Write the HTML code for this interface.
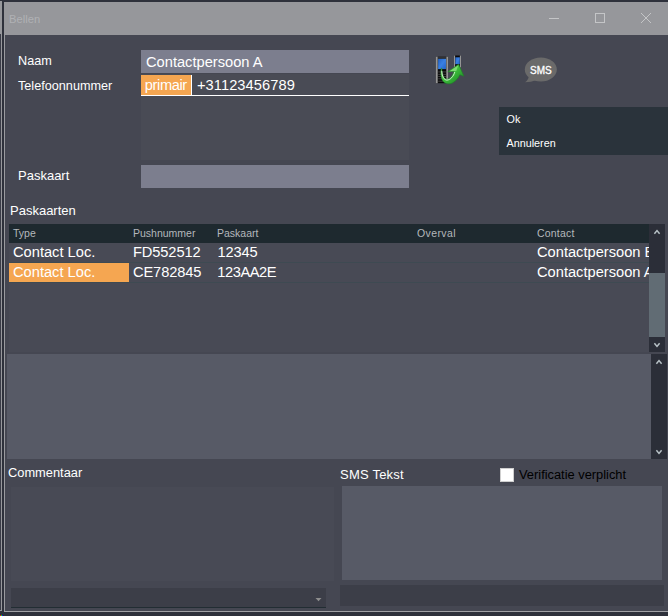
<!DOCTYPE html>
<html><head><meta charset="utf-8">
<style>
html,body{margin:0;padding:0;}
body{width:668px;height:616px;overflow:hidden;background:#2e313b;font-family:"Liberation Sans",Arial,sans-serif;position:relative;}
.abs{position:absolute;}
.t{position:absolute;white-space:nowrap;color:#fff;line-height:1;}
.lbl{font-size:12.67px;}
.val{font-size:14.67px;}
.hdr{font-size:10.5px;color:#b4b8bc;}
</style></head><body>
<!-- behind window slivers -->
<div class="abs" style="left:0;top:1px;width:2px;height:33px;background:#97989c"></div>
<div class="abs" style="left:0;top:34px;width:1px;height:577px;background:#3a3c47"></div>
<div class="abs" style="left:1px;top:34px;width:1px;height:577px;background:#97989c"></div>
<div class="abs" style="left:0;top:610px;width:2px;height:1px;background:#97989c"></div>
<div class="abs" style="left:0;top:615px;width:1px;height:1px;background:#f00"></div><div class="abs" style="left:1px;top:615px;width:1px;height:1px;background:#0f0"></div><div class="abs" style="left:2px;top:615px;width:1px;height:1px;background:#00f"></div>
<!-- window -->
<div class="abs" style="left:4px;top:2px;width:664px;height:33px;background:#96979b"></div>
<div class="abs" style="left:4px;top:35px;width:664px;height:577px;background:#454752"></div>
<div class="abs" style="left:4px;top:35px;width:1px;height:577px;background:#9a9b9f"></div>
<div class="abs" style="left:4px;top:611px;width:664px;height:1px;background:#a0a1a5"></div>
<div class="t" style="left:9px;top:13.6px;font-size:11.2px;color:#b0b1b4">Bellen</div>
<!-- window controls -->
<svg class="abs" style="left:540px;top:8px" width="128" height="22" viewBox="0 0 128 22">
<g stroke="#c4c5c7" stroke-width="1" fill="none">
<line x1="9" y1="10.5" x2="19" y2="10.5"/>
<rect x="55.5" y="5.5" width="9" height="9"/>
<line x1="101" y1="5" x2="111" y2="15"/><line x1="111" y1="5" x2="101" y2="15"/>
</g></svg>

<!-- form top -->
<div class="t lbl" style="left:18px;top:55px">Naam</div>
<div class="t lbl" style="left:18px;top:80px">Telefoonnummer</div>
<div class="t lbl" style="left:18px;top:169px;font-size:13px">Paskaart</div>
<div class="abs" style="left:141px;top:50px;width:268px;height:23px;background:#7c7e8e"></div>
<div class="t val" style="left:146px;top:55px">Contactpersoon A</div>
<div class="abs" style="left:141px;top:74px;width:268px;height:86px;background:#494b55"></div>
<div class="abs" style="left:141px;top:75px;width:50px;height:20px;background:#f5a651"></div>
<div class="abs" style="left:191px;top:75px;width:1px;height:21px;background:#fff"></div>
<div class="abs" style="left:141px;top:95px;width:268px;height:1px;background:#fff"></div>
<div class="abs" style="left:141px;top:75px;width:47.5px;height:20px;overflow:hidden"><div class="t val" style="left:3.8px;top:2.5px;letter-spacing:-0.4px">primair</div></div>
<div class="t val" style="left:197px;top:78.3px;letter-spacing:0.06px">+31123456789</div>
<div class="abs" style="left:141px;top:165px;width:268px;height:23px;background:#7c7e8e"></div>

<!-- icons -->
<svg class="abs" style="left:430px;top:50px" width="40" height="40" viewBox="0 0 40 40">
<defs>
<linearGradient id="g1" x1="0.1" y1="0.1" x2="0.9" y2="0.9"><stop offset="0" stop-color="#86e276"/><stop offset="0.45" stop-color="#3fbe3c"/><stop offset="1" stop-color="#1c8a25"/></linearGradient>
<linearGradient id="g2" x1="0" y1="0" x2="1" y2="1"><stop offset="0" stop-color="#2462c4"/><stop offset="0.5" stop-color="#3a80e2"/><stop offset="1" stop-color="#2462c4"/></linearGradient>
</defs>
<rect x="5.8" y="6.7" width="12.3" height="26.5" fill="#0a0a0a"/>
<rect x="5.8" y="6.7" width="1.9" height="26.5" fill="#959595"/><rect x="16.3" y="6.7" width="1.8" height="26.5" fill="#959595"/>
<rect x="7.9" y="7.3" width="8.2" height="1.2" fill="#444"/>
<rect x="8.1" y="8.8" width="7.9" height="10.3" fill="url(#g2)"/>
<g fill="#555"><rect x="8.2" y="21.6" width="7.8" height="0.7"/><rect x="8.2" y="23.9" width="7.8" height="0.7"/><rect x="8.2" y="26.2" width="7.8" height="0.7"/><rect x="8.2" y="28.5" width="7.8" height="0.7"/><rect x="8.2" y="30.8" width="7.8" height="0.7"/></g>
<rect x="23.9" y="5.5" width="7.1" height="12" fill="#0a0a0a"/>
<rect x="23.9" y="5.5" width="1.2" height="12" fill="#959595"/><rect x="29.9" y="5.5" width="1.1" height="12" fill="#959595"/>
<rect x="25.3" y="7.3" width="4.5" height="6.9" fill="url(#g2)"/>
<path d="M11.4 18 C10.4 22 10.6 27 12.5 30.5 C14.5 33.9 19 34.7 22.5 32.9 C26 31.1 28.7 27.8 29.8 24.8 L33.9 26.2 L28.6 14.3 L17.8 21.8 L23.9 21.4 C22.8 25.3 20 29 16.9 29.3 C13.7 29.2 12.1 24.5 11.8 18.3 Z" fill="url(#g1)" stroke="#1f7f27" stroke-width="0.6" stroke-linejoin="round"/>
<path d="M11.8 21.5 C12.3 26.5 13.9 30 16.9 30.1 C20.3 30 23.6 26.4 24.7 22.3" fill="none" stroke="#f2fff0" stroke-width="0.9" stroke-linecap="round" opacity="0.9"/>
<path d="M19.8 21.2 L28.2 15.4 L26.3 21 Z" fill="#b6f5a6" opacity="0.5"/>
</svg>
<svg class="abs" style="left:520px;top:52px;opacity:0.999" width="44" height="36" viewBox="0 0 44 36">
<ellipse cx="20.8" cy="17.6" rx="16" ry="12" fill="#6a6a6a"/>
<path d="M9 24 C8.5 27 7 29 5 30.2 C9 30.2 13 29.5 15.5 28 Z" fill="#6a6a6a"/>
<text x="20.9" y="22.1" text-anchor="middle" font-family="Liberation Sans, Arial, sans-serif" font-size="10" fill="#fff" stroke="#fff" stroke-width="0.3">SMS</text>
</svg>

<!-- ok / annuleren -->
<div class="abs" style="left:499px;top:107px;width:169px;height:48px;background:#2a333b"></div>
<div class="t" style="left:506.5px;top:114px;font-size:10.8px">Ok</div>
<div class="t" style="left:506.5px;top:138px;font-size:10.8px">Annuleren</div>

<!-- Paskaarten -->
<div class="t lbl" style="left:10px;top:204px;font-size:13px">Paskaarten</div>
<div class="abs" style="left:9px;top:224px;width:640px;height:128px;background:#484a55"></div>
<div class="abs" style="left:9px;top:224px;width:640px;height:19px;background:#1e292f"></div>
<div class="t hdr" style="left:13px;top:228px">Type</div>
<div class="t hdr" style="left:133px;top:228px">Pushnummer</div>
<div class="t hdr" style="left:217px;top:228px">Paskaart</div>
<div class="t hdr" style="left:417px;top:228px;letter-spacing:0.4px">Overval</div>
<div class="t hdr" style="left:537px;top:228px;letter-spacing:0.2px">Contact</div>
<div class="abs" style="left:9px;top:262px;width:640px;height:1px;background:#3e4a52"></div>
<div class="abs" style="left:9px;top:282px;width:640px;height:1px;background:#3e4a52"></div>
<div class="abs" style="left:9px;top:263px;width:120px;height:19px;background:#f5a651"></div>
<div class="abs" style="left:9px;top:243px;width:640px;height:40px;overflow:hidden">
<div class="t val" style="left:4px;top:2px">Contact Loc.</div>
<div class="t val" style="left:124px;top:2px;letter-spacing:-0.12px">FD552512</div>
<div class="t val" style="left:208.6px;top:2px;letter-spacing:-0.2px">12345</div>
<div class="t val" style="left:528px;top:2px">Contactpersoon B</div>
<div class="t val" style="left:4px;top:22px">Contact Loc.</div>
<div class="t val" style="left:124px;top:22px;letter-spacing:-0.12px">CE782845</div>
<div class="t val" style="left:208.3px;top:22px;letter-spacing:-0.45px">123AA2E</div>
<div class="t val" style="left:528px;top:22px">Contactpersoon A</div>
</div>
<!-- scrollbar 1 -->
<div class="abs" style="left:649px;top:224px;width:16px;height:128px;background:#2b2e38"></div>
<div class="abs" style="left:649px;top:273px;width:16px;height:64px;background:#616c74"></div>
<svg class="abs" style="left:649px;top:224px" width="16" height="128" viewBox="0 0 16 128"><g fill="none" stroke="#b9c3c8" stroke-width="1.5"><polyline points="5.4,9.7 8,6.6 10.6,9.7"/><polyline points="5.4,119.3 8,122.4 10.6,119.3"/></g></svg>

<!-- second panel -->
<div class="abs" style="left:7px;top:354px;width:644px;height:105px;background:#575a66"></div>
<div class="abs" style="left:651px;top:354px;width:16px;height:105px;background:#2b2e38"></div>
<svg class="abs" style="left:651px;top:354px" width="16" height="105" viewBox="0 0 16 105"><g fill="none" stroke="#b9c3c8" stroke-width="1.5"><polyline points="5.4,9.7 8,6.6 10.6,9.7"/><polyline points="5.4,96.3 8,99.4 10.6,96.3"/></g></svg>

<!-- bottom -->
<div class="t lbl" style="left:8px;top:466.8px;font-size:12.85px">Commentaar</div>
<div class="abs" style="left:11px;top:487px;width:323px;height:94px;background:#484a55"></div>
<div class="abs" style="left:11px;top:588px;width:315px;height:20px;background:#3c3e48"></div>
<div class="abs" style="left:11px;top:607px;width:315px;height:1px;background:#222d33"></div>
<svg class="abs" style="left:314px;top:597px" width="10" height="6" viewBox="0 0 10 6"><polygon points="1.5,1 7.5,1 4.5,4.2" fill="#8e8e8e"/></svg>

<div class="t lbl" style="left:340px;top:468.3px;font-size:13px;letter-spacing:0.22px">SMS Tekst</div>
<div class="abs" style="left:500px;top:468px;width:12px;height:12px;background:#fff;border:1px solid #cfcfcf"></div>
<div class="t lbl" style="left:519px;top:468.7px;font-size:12.85px;color:#000">Verificatie verplicht</div>
<div class="abs" style="left:342px;top:486px;width:320px;height:94px;background:#575a66"></div>
<div class="abs" style="left:340px;top:585px;width:324px;height:21px;background:#3c3e48"></div>
</body></html>
